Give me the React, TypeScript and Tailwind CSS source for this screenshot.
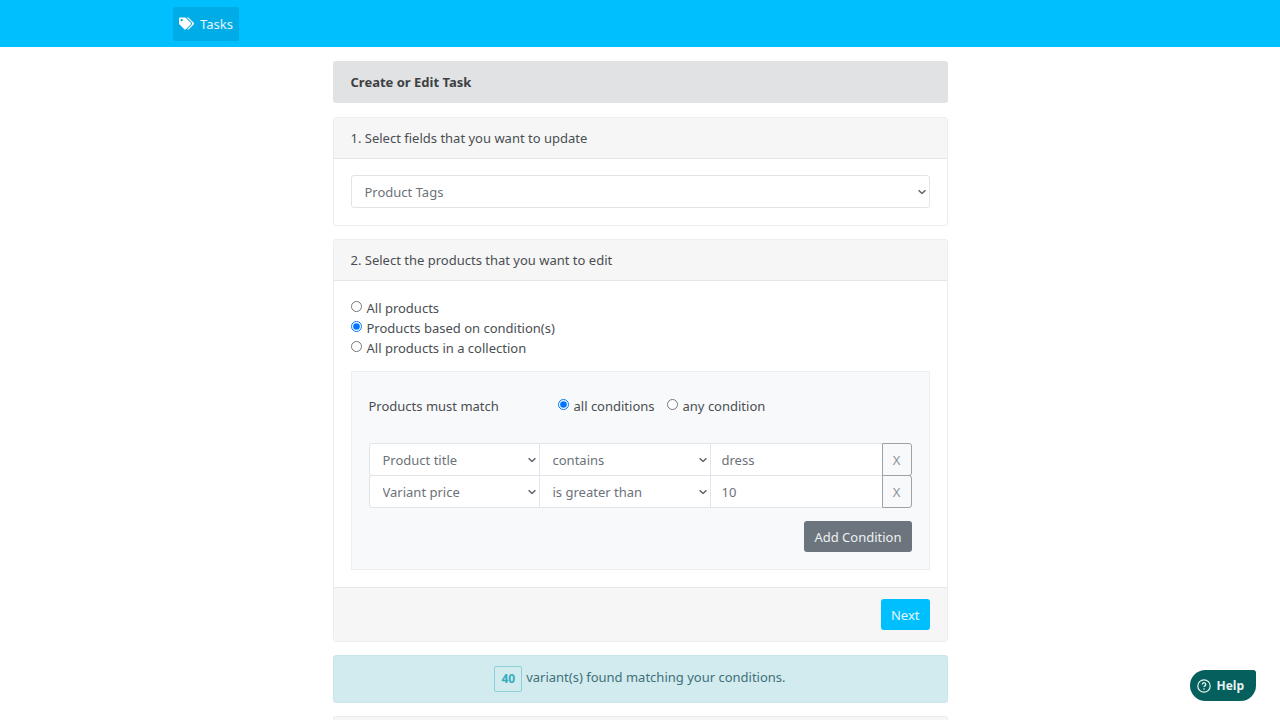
import type { ReactNode } from 'react';
import { FaTags } from 'react-icons/fa';

type Condition = {
  field: string;
  operator: string;
  value: string;
};

const CONDITIONS: Condition[] = [
  { field: 'Product title', operator: 'contains', value: 'dress' },
  { field: 'Variant price', operator: 'is greater than', value: '10' },
];

const FIELDS = ['Product title', 'Variant price', 'Product type', 'Product vendor'];
const OPERATORS = ['contains', 'is greater than', 'is less than', 'is equal to'];

const PRODUCT_SCOPES = [
  { id: 'scope-all', label: 'All products' },
  { id: 'scope-conditions', label: 'Products based on condition(s)' },
  { id: 'scope-collection', label: 'All products in a collection' },
];

function Chevron() {
  return (
    <svg
      viewBox="0 0 8 5"
      className="pointer-events-none absolute top-1/2 right-1 h-[5px] w-2 -translate-y-1/2"
      fill="none"
      stroke="#62686e"
      strokeWidth="1.6"
    >
      <path d="M0.6 0.7l3.4 3.3 3.4-3.3" />
    </svg>
  );
}

function Select({
  label,
  value,
  options,
  className,
}: {
  label: string;
  value: string;
  options: string[];
  className: string;
}) {
  return (
    <div className="relative min-w-0 flex-1">
      <select
        aria-label={label}
        defaultValue={value}
        className={`block h-[33px] w-full appearance-none border border-[#e1e4e8] bg-white px-[13px] text-[#6c7278] ${className}`}
      >
        {options.map((option) => (
          <option key={option}>{option}</option>
        ))}
      </select>
      <Chevron />
    </div>
  );
}

function Radio({ id, name, label, checked }: { id: string; name: string; label: string; checked?: boolean }) {
  return (
    <div className="flex items-start">
      <input
        type="radio"
        id={id}
        name={name}
        defaultChecked={checked}
        className="mt-[3px] mr-[5px] size-[11px] accent-[#0075ff]"
      />
      <label htmlFor={id}>{label}</label>
    </div>
  );
}

function Card({ title, children }: { title: string; children: ReactNode }) {
  return (
    <section className="mb-[13px] rounded-[3px] border border-[#ededee]">
      <h2 className="border-b border-[#e4e5e6] bg-[#f6f6f6] px-[17px] py-[10px]">{title}</h2>
      {children}
    </section>
  );
}

function ConditionRow({ condition, index }: { condition: Condition; index: number }) {
  return (
    <div className="-mt-px grid grid-cols-[1fr_1fr_1fr_30px]">
      <Select
        label={`Field ${index + 1}`}
        value={condition.field}
        options={FIELDS}
        className="rounded-l-[3px]"
      />
      <Select
        label={`Operator ${index + 1}`}
        value={condition.operator}
        options={OPERATORS}
        className="border-l-0"
      />
      <input
        type="text"
        aria-label={`Value ${index + 1}`}
        defaultValue={condition.value}
        className="h-[33px] min-w-0 border border-r-0 border-l-0 border-[#e1e4e8] bg-white px-[11px] text-[#6c7278]"
      />
      <button
        type="button"
        aria-label="Remove condition"
        className="h-[33px] rounded-r-[3px] border border-[#9da2a8] text-[#8b9197]"
      >
        X
      </button>
    </div>
  );
}

export default function App() {
  return (
    <div className="min-h-screen bg-white font-['Noto_Sans',sans-serif] text-[13px] leading-5 text-[#4a4e52]">
      <nav className="bg-[#00bfff]">
        <div className="mx-auto flex h-[47px] max-w-[934px] items-center">
          <a
            href="#tasks"
            className="flex h-[34px] items-center gap-1.5 rounded-[2px] bg-[#00ace6] px-1.5 text-[#e2f6fd]"
          >
            <FaTags className="size-[15px] text-white" />
            Tasks
          </a>
        </div>
      </nav>

      <main className="mx-auto max-w-[615px] pt-[14px]">
        <h1 className="mb-[14px] rounded-[3px] bg-[#e1e2e4] px-[18px] py-[11px] font-bold text-[#3d4043]">
          Create or Edit Task
        </h1>

        <Card title="1. Select fields that you want to update">
          <div className="flex px-[17px] pt-4 pb-[17px]">
            <Select
              label="Field to update"
              value="Product Tags"
              options={['Product Tags', 'Product Title', 'Product Type']}
              className="rounded-[3px]"
            />
          </div>
        </Card>

        <Card title="2. Select the products that you want to edit">
          <div className="p-[17px]">
            <fieldset className="mb-[13px]">
              {PRODUCT_SCOPES.map((scope) => (
                <Radio
                  key={scope.id}
                  id={scope.id}
                  name="scope"
                  label={scope.label}
                  checked={scope.id === 'scope-conditions'}
                />
              ))}
            </fieldset>

            <div className="border border-[#eceef0] bg-[#f8f9fb] p-[17px]">
              <fieldset className="mt-[7px] mb-[28px] flex">
                <span className="w-1/3">Products must match</span>
                <div className="flex gap-3 pl-2">
                  <Radio id="match-all" name="match" label="all conditions" checked />
                  <Radio id="match-any" name="match" label="any condition" />
                </div>
              </fieldset>
              {CONDITIONS.map((condition, index) => (
                <ConditionRow key={condition.field} condition={condition} index={index} />
              ))}
              <div className="mt-[13px] flex justify-end">
                <button
                  type="button"
                  className="h-[31px] rounded-[3px] bg-[#6c757d] px-[10px] text-[#eef0f1]"
                >
                  Add Condition
                </button>
              </div>
            </div>
          </div>
          <div className="flex justify-end border-t border-[#e7e8e9] bg-[#f6f6f6] px-[17px] py-[11px]">
            <button type="button" className="h-[31px] rounded-[3px] bg-[#00bfff] px-[10px] text-[#e6f8ff]">
              Next
            </button>
          </div>
        </Card>

        <div
          role="status"
          className="mb-[13px] flex h-12 items-center justify-center gap-1 rounded-[3px] border border-[#c8e7ec] bg-[#d1ebef] text-[#427079]"
        >
          <span className="rounded-[2px] border border-[#8dd0da] px-[6px] py-[2px] text-[12px] font-bold text-[#35adc0]">
            40
          </span>
          <span className="pb-1">variant(s) found matching your conditions.</span>
        </div>

        <section className="h-1 rounded-t-[3px] border border-b-0 border-[#ededee] bg-[#f6f6f6]" />
      </main>

      <button
        type="button"
        className="fixed right-6 bottom-[19px] flex h-[31px] items-center gap-[5px] rounded-2xl rounded-tr-[3px] bg-[#055f5d] pr-3 pl-[7px] font-['Open_Sans',sans-serif] text-[12px] font-bold text-[#e8f3f3]"
      >
        <svg viewBox="0 0 14 14" className="size-[14px]" fill="none" stroke="currentColor">
          <circle cx="7" cy="7" r="6.2" strokeWidth="1.2" />
          <path d="M5.3 5.5a1.7 1.7 0 1 1 2.6 1.4c-.6.4-.9.6-.9 1.2" strokeWidth="1.3" />
          <circle cx="7" cy="10" r="0.8" fill="currentColor" stroke="none" />
        </svg>
        Help
      </button>
    </div>
  );
}
